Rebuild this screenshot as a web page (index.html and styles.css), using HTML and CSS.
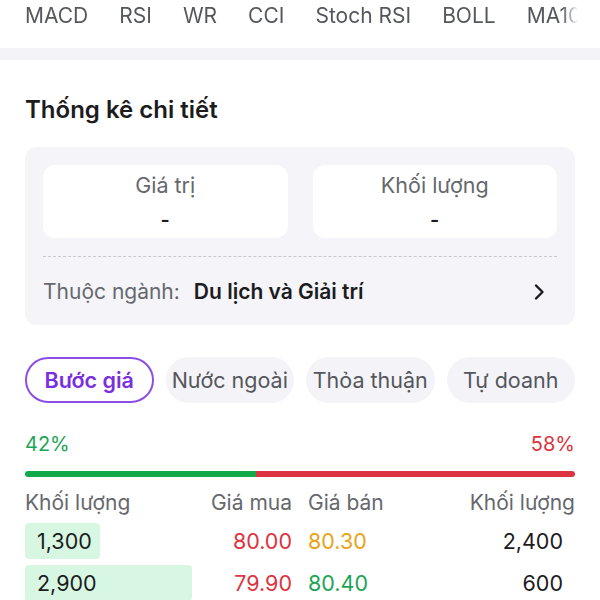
FILE: index.html
```html
<!doctype html>
<html>
<head>
  <meta charset="utf-8">
  <link rel="stylesheet" href="styles.css">
</head>
<body>
  <div class="indicators">
    <span>MACD</span>
    <span>RSI</span>
    <span>WR</span>
    <span>CCI</span>
    <span>Stoch RSI</span>
    <span>BOLL</span>
    <span>MA10</span>
  </div>
  <div class="band"></div>

  <div class="content">
    <h2 class="title">Thống kê chi tiết</h2>

    <div class="stats">
      <div class="stat-boxes">
        <div class="stat-box">
          <div class="stat-label">Giá trị</div>
          <div class="stat-value">-</div>
        </div>
        <div class="stat-box">
          <div class="stat-label">Khối lượng</div>
          <div class="stat-value">-</div>
        </div>
      </div>
      <div class="sector">
        <span class="sector-label">Thuộc ngành:</span>
        <span class="sector-name">Du lịch và Giải trí</span>
        <svg class="chevron" width="12" height="18" viewBox="0 0 12 18">
          <path d="M3 2.5 L9.5 9 L3 15.5" fill="none" stroke="#1c1c1e" stroke-width="2.4" stroke-linecap="round" stroke-linejoin="round"/>
        </svg>
      </div>
    </div>

    <div class="pills">
      <div class="pill active">Bước giá</div>
      <div class="pill">Nước ngoài</div>
      <div class="pill">Thỏa thuận</div>
      <div class="pill">Tự doanh</div>
    </div>

    <div class="ratio">
      <span class="up">42%</span>
      <span class="down">58%</span>
    </div>
    <div class="ratio-bar">
      <div class="ratio-buy" style="width: 42%"></div>
      <div class="ratio-sell"></div>
    </div>

    <div class="book">
      <div class="book-row head">
        <div class="half">
          <span>Khối lượng</span>
          <span>Giá mua</span>
        </div>
        <div class="half">
          <span>Giá bán</span>
          <span>Khối lượng</span>
        </div>
      </div>
      <div class="book-row">
        <div class="half">
          <span class="depth" style="width: 75px">1,300</span>
          <span class="down">80.00</span>
        </div>
        <div class="half">
          <span class="ref">80.30</span>
          <span class="vol">2,400</span>
        </div>
      </div>
      <div class="book-row">
        <div class="half">
          <span class="depth" style="width: 167px">2,900</span>
          <span class="down">79.90</span>
        </div>
        <div class="half">
          <span class="up">80.40</span>
          <span class="vol">600</span>
        </div>
      </div>
    </div>
  </div>
</body>
</html>
```

FILE: styles.css
```css
body {
  margin: 0;
  background: #fff;
  font-family: Inter, "Noto Sans", sans-serif;
  color: #1c1c1e;
  overflow: hidden;
}

.indicators {
  display: flex;
  gap: 31px;
  padding: 4px 25px 0;
  height: 44px;
  font-size: 21px;
  line-height: 24px;
  color: #55575c;
  white-space: nowrap;
  overflow: hidden;
  -webkit-mask-image: linear-gradient(to right, #000 562px, transparent 578px);
  mask-image: linear-gradient(to right, #000 562px, transparent 578px);
}

.band {
  height: 12px;
  background: #f4f4f8;
}

.content {
  padding: 0 25px;
}

.title {
  margin: 35px 0 22px;
  font-size: 24px;
  line-height: 30px;
  font-weight: 600;
}

.stats {
  background: #f4f4f9;
  border-radius: 12px;
  padding: 18px 18px 0;
}

.stat-boxes {
  display: grid;
  grid-template-columns: 1fr 1fr;
  gap: 25px;
}

.stat-box {
  background: #fff;
  border-radius: 12px;
  height: 73px;
  text-align: center;
  padding-top: 7px;
  box-sizing: border-box;
}

.stat-label {
  font-size: 21.5px;
  line-height: 26px;
  color: #66686d;
}

.stat-value {
  font-size: 20px;
  line-height: 26px;
  font-weight: 600;
  margin-top: 9px;
}

.sector {
  display: flex;
  align-items: center;
  margin-top: 18px;
  border-top: 1px dashed #c9cad0;
  padding: 22px 0 20px;
  font-size: 21px;
  line-height: 26px;
}

.sector-label {
  color: #66686d;
  margin-right: 14px;
}

.sector-name {
  font-weight: 600;
  flex: 1;
}

.chevron {
  margin-right: 12px;
}

.pills {
  display: grid;
  grid-template-columns: repeat(4, 1fr);
  gap: 12px;
  margin-top: 32px;
}

.pill {
  height: 46px;
  border-radius: 23px;
  background: #f3f3f8;
  color: #55575c;
  font-size: 21.5px;
  display: flex;
  align-items: center;
  justify-content: center;
  white-space: nowrap;
  box-sizing: border-box;
}

.pill.active {
  background: #fff;
  border: 2px solid #8b4fe6;
  color: #7a2fdf;
  font-weight: 600;
}

.ratio {
  display: flex;
  justify-content: space-between;
  margin-top: 29px;
  font-size: 20px;
  line-height: 24px;
}

.up {
  color: #1ea455;
}

.down {
  color: #dc3440;
}

.ref {
  color: #eba316;
}

.ratio-bar {
  display: flex;
  height: 6px;
  margin-top: 15px;
  border-radius: 3px;
  overflow: hidden;
}

.ratio-buy {
  background: #12a94a;
}

.ratio-sell {
  flex: 1;
  background: #dc3440;
}

.book {
  margin-top: 12px;
  font-size: 21.5px;
}

.book-row {
  display: grid;
  grid-template-columns: 1fr 1fr;
  column-gap: 16px;
  height: 42px;
  align-items: center;
}

.book-row.head {
  height: 26px;
  font-size: 21px;
  color: #66686d;
  margin-bottom: 5px;
}

.half {
  display: flex;
  justify-content: space-between;
  align-items: center;
}

.depth {
  display: block;
  box-sizing: border-box;
  height: 36px;
  line-height: 36px;
  padding-left: 12px;
  background: #d8f7e2;
  border-radius: 4px;
  color: #1c1c1e;
  white-space: nowrap;
}

.vol {
  padding-right: 12px;
  color: #1c1c1e;
}
```
